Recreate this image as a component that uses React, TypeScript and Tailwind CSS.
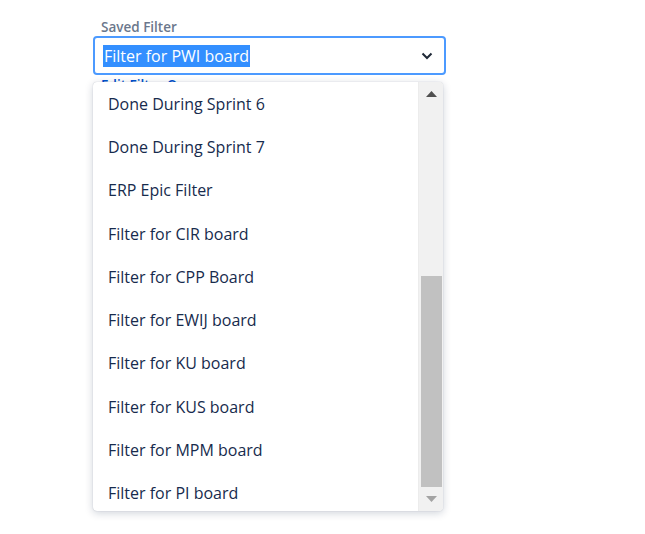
import React from "react";

const items = [
  "Done During Sprint 6",
  "Done During Sprint 7",
  "ERP Epic Filter",
  "Filter for CIR board",
  "Filter for CPP Board",
  "Filter for EWIJ board",
  "Filter for KU board",
  "Filter for KUS board",
  "Filter for MPM board",
  "Filter for PI board",
];

export default function App() {
  return (
    <div
      className="w-[645px] h-[534px] bg-white relative"
      style={{ fontFamily: '"Open Sans", "Noto Sans", sans-serif' }}
    >
      <div className="pl-[93px] pt-[18px]">
        <div className="w-[353px]">
          <div className="pl-[8px] text-[13.5px] font-semibold text-[#6b778c] leading-[18px]">Saved Filter</div>
          <div className="h-[39px] border-2 border-[#4c9aff] rounded-[4px] flex items-center pl-[8px] pr-[8px]">
            <span className="bg-[#338fff] text-white text-[16px] leading-[22px] px-[1px]">Filter for PWI board</span>
            <div className="flex-1" />
            <svg width="12" height="8" viewBox="0 0 12 8" className="mr-[3px]">
              <path d="M1.5 1.5 L6 6 L10.5 1.5" fill="none" stroke="#1f2937" strokeWidth="2" />
            </svg>
          </div>
          <div className="pl-[8px] mt-[3px] text-[13.5px] font-semibold text-[#0052cc] leading-[14px]">Edit Filter Query</div>
        </div>
      </div>

      <div className="absolute left-[93px] top-[82px] w-[350px] h-[429px] bg-white rounded-[4px] shadow-[0_2px_8px_rgba(9,30,66,0.2),0_0_1px_rgba(9,30,66,0.3)] flex overflow-hidden">
        <div className="flex-1 overflow-hidden">
          {items.map((t) => (
            <div key={t} className="h-[43.3px] flex items-center pl-[15px] text-[16px] text-[#172b4d]">
              {t}
            </div>
          ))}
        </div>
        <div className="w-[25px] bg-[#f1f1f1] border-l border-[#ececec] flex flex-col items-center">
          <div className="h-[24px] flex items-center justify-center">
            <svg width="11" height="6" viewBox="0 0 11 6">
              <path d="M0 6 L5.5 0 L11 6 Z" fill="#505050" />
            </svg>
          </div>
          <div className="flex-1 w-[21px] flex flex-col">
            <div className="h-[170px]" />
            <div className="flex-1 bg-[#c1c1c1]" />
          </div>
          <div className="h-[24px] flex items-center justify-center">
            <svg width="11" height="6" viewBox="0 0 11 6">
              <path d="M0 0 L5.5 6 L11 0 Z" fill="#a3a3a3" />
            </svg>
          </div>
        </div>
      </div>
    </div>
  );
}
